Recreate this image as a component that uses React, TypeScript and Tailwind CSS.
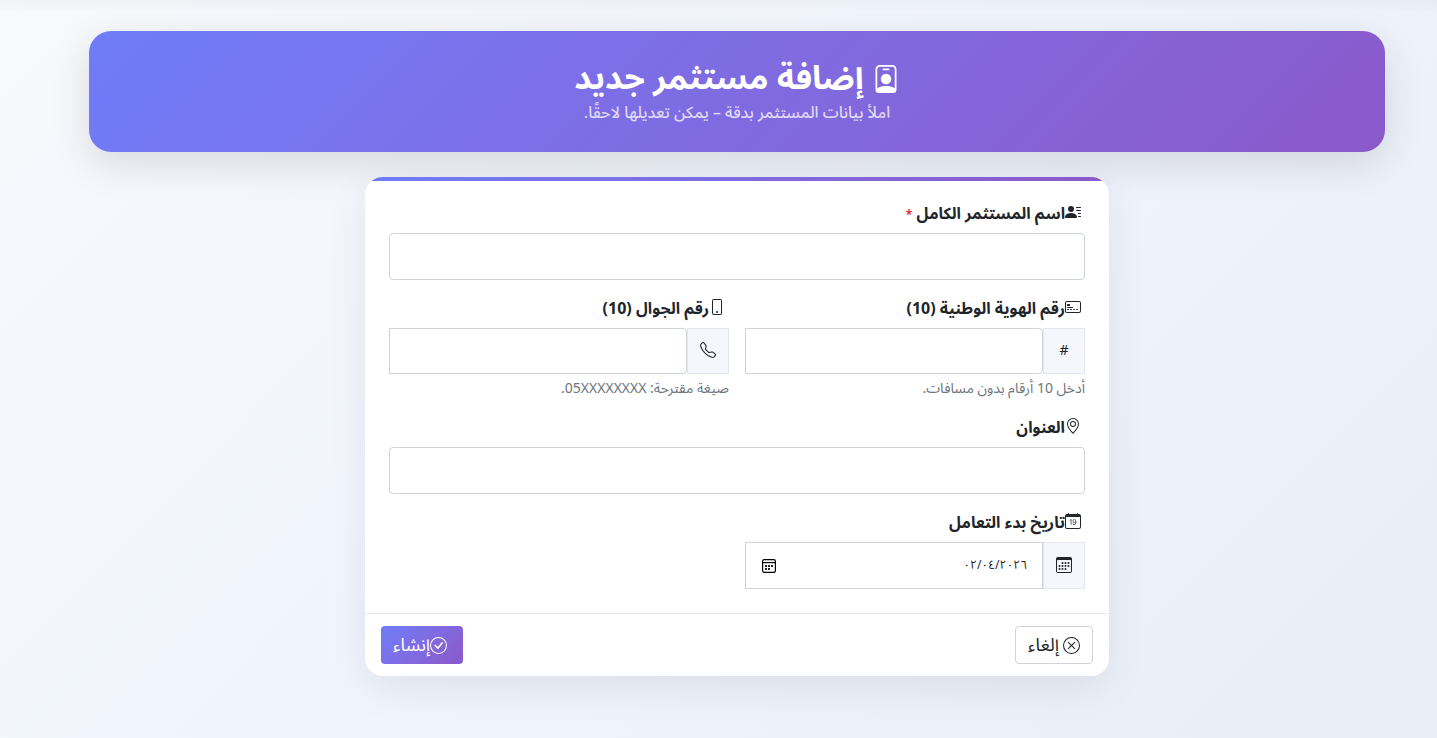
import { useState, type ReactNode } from "react";
import {
  BsCalendar3,
  BsCalendarDate,
  BsCheckCircle,
  BsCreditCard2Front,
  BsGeoAlt,
  BsPersonBadge,
  BsPersonLinesFill,
  BsPhone,
  BsTelephone,
  BsXCircle,
} from "react-icons/bs";

function FieldLabel({ htmlFor, icon, children }: { htmlFor: string; icon: ReactNode; children: ReactNode }) {
  return (
    <label htmlFor={htmlFor} className="mb-2 flex h-6 items-center pt-0.5 pr-1 text-[16px] font-bold text-[#212529]">
      <span className="shrink-0 pb-1">{icon}</span>
      <span className="whitespace-nowrap">{children}</span>
    </label>
  );
}

const inputClass =
  "w-full min-w-0 border border-[#ced4da] bg-white px-[15px] text-[#212529] outline-none focus:border-[#6f7dfb]";

function Addon({ children }: { children: ReactNode }) {
  return (
    <span className="flex w-[42px] shrink-0 items-center justify-center border border-[#e5e7ef] bg-[#f6f7fd] pb-0.5 text-[16px] text-[#212529]">
      {children}
    </span>
  );
}

function PickerIcon() {
  return (
    <svg viewBox="0 0 14 14" className="h-[14px] w-[14px]" aria-hidden="true">
      <rect x="0.6" y="0.6" width="12.8" height="12.8" rx="1.6" fill="none" stroke="#000" strokeWidth="1.2" />
      <path d="M1 3.6h12" stroke="#000" strokeWidth="1.2" />
      <path d="M3 6h2v2H3zM6 6h2v2H6zM9 6h2v2H9zM3 9h2v2H3zM6 9h2v2H6z" fill="#222" />
    </svg>
  );
}

export default function App() {
  const [date, setDate] = useState("٠٢/٠٤/٢٠٢٦");
  return (
    <div
      dir="rtl"
      lang="ar"
      className="min-h-screen bg-linear-135 from-[#f7f9fc] via-[#f0f4fd] to-[#e9edf6] font-['Noto_Sans_Arabic','Noto_Sans','DejaVu_Sans',sans-serif]"
    >
      <div className="h-3 bg-linear-to-b from-black/3 to-transparent" />
      <main className="pt-[19px] pb-[62px] pl-[37px]">
        <div className="mx-auto max-w-[1296px]">
          <header className="mb-[25px] flex h-[121px] flex-col items-center rounded-[22px] bg-linear-135 from-[#6f7cf9] to-[#8b59ca] pt-6 text-white shadow-[0_12px_40px_rgba(0,0,0,0.12)]">
            <h1 className="flex h-12 items-center gap-2 text-[33px] leading-9 font-bold">
              <BsPersonBadge className="h-7 w-7" />
              <span>إضافة مستثمر جديد</span>
            </h1>
            <p className="text-[16px] leading-5 font-medium text-white/75">املأ بيانات المستثمر بدقة – يمكن تعديلها لاحقًا.</p>
          </header>

          <form
            onSubmit={(e) => e.preventDefault()}
            className="mx-auto max-w-[744px] overflow-hidden rounded-[18px] bg-white shadow-[0_12px_40px_rgba(0,0,0,0.08)]"
          >
            <div className="h-1 bg-linear-to-r from-[#6f7cf9] to-[#8b59ca]" />
            <div className="px-6 pt-5 pb-6">
              <div className="mb-4">
                <FieldLabel htmlFor="name" icon={<BsPersonLinesFill />}>
                  اسم المستثمر الكامل <span className="text-[12px] text-[#dc3545]">*</span>
                </FieldLabel>
                <input id="name" type="text" required className={`${inputClass} h-[47px] rounded text-[14px]`} />
              </div>

              <div className="mb-4 grid grid-cols-2 gap-4">
                <div>
                  <FieldLabel htmlFor="nid" icon={<BsCreditCard2Front />}>
                    رقم الهوية الوطنية (10)
                  </FieldLabel>
                  <div className="flex">
                    <Addon>
                      <span className="text-[14px]">#</span>
                    </Addon>
                    <input id="nid" type="text" inputMode="numeric" maxLength={10} className={`${inputClass} h-[46px] rounded-r text-[14px]`} />
                  </div>
                  <p className="mt-1 text-[14px] leading-[21px] text-[#6c757d]">أدخل 10 أرقام بدون مسافات.</p>
                </div>
                <div>
                  <FieldLabel htmlFor="mobile" icon={<BsPhone />}>
                    رقم الجوال (10)
                  </FieldLabel>
                  <div className="flex">
                    <Addon>
                      <BsTelephone />
                    </Addon>
                    <input id="mobile" type="tel" maxLength={10} className={`${inputClass} h-[46px] rounded-r text-[14px]`} />
                  </div>
                  <p className="mt-1 text-[14px] leading-[21px] text-[#6c757d]">صيغة مقترحة: 05XXXXXXXX.</p>
                </div>
              </div>

              <div className="mb-4">
                <FieldLabel htmlFor="address" icon={<BsGeoAlt />}>
                  العنوان
                </FieldLabel>
                <input id="address" type="text" className={`${inputClass} h-[47px] rounded text-[14px]`} />
              </div>

              <div className="grid grid-cols-2 gap-4">
                <div>
                  <FieldLabel htmlFor="start" icon={<BsCalendarDate />}>
                    تاريخ بدء التعامل
                  </FieldLabel>
                  <div className="flex">
                    <Addon>
                      <BsCalendar3 />
                    </Addon>
                    <div className="relative min-w-0 grow">
                      <input
                        id="start"
                        type="text"
                        value={date}
                        onChange={(e) => setDate(e.target.value)}
                        className={`${inputClass} h-[47px] text-[12px]`}
                      />
                      <button type="button" aria-label="اختيار التاريخ" className="absolute inset-y-0 left-[17px]">
                        <PickerIcon />
                      </button>
                    </div>
                  </div>
                </div>
              </div>
            </div>

            <div className="flex items-center justify-between border-t border-[#e9ebef] px-4 py-3">
              <button
                type="button"
                className="flex h-[38px] items-center gap-1 rounded border border-[#ced4da] bg-white px-3 text-[18px] leading-6 text-[#212529]"
              >
                <BsXCircle className="h-[17px] w-[17px]" />
                <span>إلغاء</span>
              </button>
              <button
                type="submit"
                className="flex h-[38px] items-center rounded bg-linear-135 from-[#6f7cf9] to-[#8b59ca] pr-4 pl-3 text-[18px] leading-6 text-white"
              >
                <BsCheckCircle className="h-[17px] w-[17px]" />
                <span>إنشاء</span>
              </button>
            </div>
          </form>
        </div>
      </main>
    </div>
  );
}
